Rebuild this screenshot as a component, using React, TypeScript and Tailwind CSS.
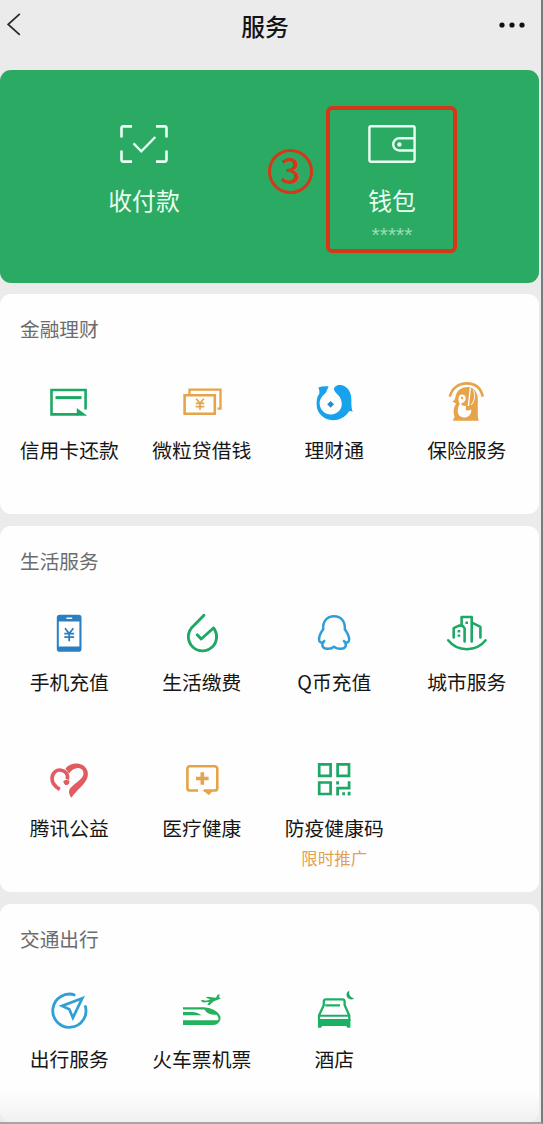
import type { ReactNode } from "react";

const GREEN = "#1ea866";
const ORANGE = "#e5a34a";
const BLUE = "#2f9fd6";

function Icon({ color, children }: { color: string; children: ReactNode }) {
  return (
    <svg viewBox="0 0 48 48" className="size-12" fill="none" stroke={color} strokeWidth="2.6">
      {children}
    </svg>
  );
}

function CreditCardIcon() {
  return (
    <Icon color={GREEN}>
      <path d="M40.6 31.5V12H6.5v24.4H33" />
      <path d="M10.5 19.6h26" strokeWidth="3" />
      <path d="M31.8 30l10.4 7.7H31.8z" fill={GREEN} stroke="none" />
    </Icon>
  );
}

function LoanIcon() {
  return (
    <Icon color={ORANGE}>
      <path d="M6.6 17.3h30.2v18.4H6.6z" />
      <path d="M11.5 16.5v-4.9h31v19h-3" strokeWidth="2.3" />
      <path d="M18.2 20.7l3.8 4.5 3.8-4.5M22 25v6.8M17.7 25.4h8.6M17.7 28.6h8.6" strokeWidth="1.7" />
    </Icon>
  );
}

function FishIcon() {
  return (
    <Icon color="#19a2ec">
      <path
        d="M8.3 9.6C11.5 8.3 15 7.9 18.6 8.4C17.6 10.6 16.8 13 15.6 14.8C14.6 16.4 12.6 17.8 11.3 19.8C10 21.8 9.5 23.8 9.7 26C10.2 32.4 15 36.6 21 36.5C27.3 36.3 31.8 31.7 31.8 26C31.7 22.3 30.4 19.2 28 16.9C26.2 15.2 24.2 13.6 24 11.3C24 8.8 26.7 6.9 30.5 7.1C37.8 7.8 41.6 15 41.4 22C41.3 26.4 41.3 29.2 42.6 34C40.8 32.5 39.7 32.7 38.5 34C35 39.4 29.5 42.2 23 42.2C14 42.1 6.6 35.3 6.6 26.5C6.6 21.5 7.2 18.5 9.3 15.8C9.6 13.6 9.3 11.6 8.3 9.6Z"
        fill="#19a2ec"
        stroke="none"
      />
      <path d="M20.6 22.9l3.4 3.4-3.4 3.4-3.4-3.4z" fill="#258fc4" stroke="none" />
    </Icon>
  );
}

function InsuranceIcon() {
  return (
    <Icon color={ORANGE}>
      <path d="M6.8 18.6C9 10 15.8 5.4 23.8 5.4S37.8 10 39.8 18.6" strokeWidth="2.6" />
      <path
        d="M25 9C31 10 34.8 14.2 34.8 21v15c0 3 .2 4.5 1 6.7H9.8c.6-1.6 1-2.6 1.8-3.8C10 34 10.4 29 13.3 25.7L9.3 23.4C12.3 22.6 12 20 12.8 17.4C14.3 12 19 9 25 9Z"
        fill={ORANGE}
        stroke="none"
      />
      <path
        d="M16.5 17.3c2.6-1.9 5.8-.5 6.2 2.2.3 2.6-1.3 4.6-3.6 5.6-1.3.6-1 2.1.4 2.4 1.3.3 2.2.5 3.5.3l-.4 3c-.1 1.7 1.6 2.3 3.8 1.4l1.8-.8c.5 4.6-2.8 8.2-7.2 8.1-4.4-.1-6.6-3.2-6.2-7.4.2-2.3.8-4.3 2-6.4-1.7-2.3-1.8-5.9-.3-8.4z"
        fill="#fff"
        stroke="none"
      />
      <path d="M27.3 10.2L25.4 28" stroke="#fff" strokeWidth="1.4" />
      <path d="M30.5 12.5c2 5 1.2 10-2.2 14.5" stroke="#fff" strokeWidth="1" />
      <circle cx="19" cy="20" r="1.2" fill={ORANGE} stroke="none" />
    </Icon>
  );
}

function PhoneIcon() {
  return (
    <Icon color="#297fc2">
      <rect x="11.8" y="4.7" width="24.7" height="37" rx="2.8" fill="#297fc2" stroke="none" />
      <path d="M13.8 11.5h20.6v25H13.8z" fill="#fff" stroke="none" />
      <path d="M22 8.2h4.6" stroke="#fff" strokeWidth="1.5" strokeLinecap="round" />
      <path d="M20 18.3l4.2 5.2 4.2-5.2M24.2 23.3v7.9M19.3 23.6h9.8M19.3 27.1h9.8" strokeWidth="1.8" />
    </Icon>
  );
}

function BillsIcon() {
  return (
    <Icon color={GREEN}>
      <path
        d="M26 5.2L13.2 18.3A14.1 14.1 0 1 0 35.5 18L23.2 29l-4-4.3"
        strokeWidth="2.9"
        strokeLinecap="round"
        strokeLinejoin="round"
      />
    </Icon>
  );
}

function PenguinIcon() {
  return (
    <Icon color={BLUE}>
      <path
        d="M14.2 31C11.5 33.8 9 32.5 9 29.3C9 25.8 11 22.4 13.2 19.3C12.6 11.4 17 6.2 24 6.2S35.4 11.4 34.8 19.3C37 22.4 39.2 25.8 39.2 29.3C39.2 32.5 36.7 33.8 34 31M14.2 31C11 34.7 12 38.5 17 38.8C20 39.1 22.3 38.4 24.1 36.7C26 38.4 28.3 39.1 31.2 38.8C36.2 38.5 37.2 34.7 34 31"
        strokeWidth="2.5"
        strokeLinecap="round"
        strokeLinejoin="round"
      />
    </Icon>
  );
}

function CityIcon() {
  return (
    <Icon color={GREEN}>
      <path
        d="M5.2 30.3C10 36.5 16.5 39.2 23.8 39.2S37.8 36.5 42.6 30.3M10.7 27.5V18.2L16 15.6H19.4L21.6 18.3V31.5M18.6 15V7H28.7V31.5M29 12.6L37.4 16.9V27.5"
        strokeWidth="2.6"
        strokeLinecap="round"
        strokeLinejoin="round"
      />
      <path d="M14.6 20.1h2.6v2.4h-2.6zM14.6 24.4h2.6v2.4h-2.6zM22.4 11.4H25v2.5h-2.6z" fill={GREEN} stroke="none" />
    </Icon>
  );
}

function HeartIcon() {
  return (
    <Icon color="#e15c61">
      <path d="M14.8 33.4C9.4 30.2 6.8 26.4 7 22C7.4 16.7 11.4 13.3 16.2 14.2C20.6 15 23.6 18.6 22.3 23.5" strokeWidth="3.6" />
      <path
        d="M20.4 12.6C24 8.2 29.5 6.8 34.8 8C40.8 9.4 44 15 42.6 20.8C40.9 28 31 34.5 26.4 41.8C24.2 39 23.2 35.6 25 32.6C28.6 27.8 36.6 24 38.2 19.2C39.3 15.4 37 12 33.2 11.9C29.5 11.8 26.4 14 24 17.6Z"
        fill="#e15c61"
        stroke="none"
      />
      <path d="M18.3 25.2c1.6-1.6 4.2-1.6 6-.6.6 2.2-.4 4.2-2.4 4.5-1.8.2-3-.8-3.6-3.9z" fill="#e15c61" stroke="none" />
    </Icon>
  );
}

function MedicalIcon() {
  return (
    <Icon color={ORANGE}>
      <path d="M20 34.5H12a2.6 2.6 0 0 1-2.6-2.6V12.8A2.6 2.6 0 0 1 12 10.2h24.7a2.6 2.6 0 0 1 2.6 2.6v19.1a2.6 2.6 0 0 1-2.6 2.6H26" />
      <path d="M24.4 34h10.8L31 39.3z" fill={ORANGE} stroke="none" />
      <path d="M24.3 16.2v12.6M18 22.5h12.6" strokeWidth="3.6" />
    </Icon>
  );
}

function QrIcon() {
  return (
    <Icon color={GREEN}>
      <path d="M9.2 8.4h11.4v11.5H9.2zM27.6 8.4H39v11.5H27.6zM9.2 26.5h11.4V38H9.2z" strokeWidth="2.7" />
      <path
        d="M26.2 25.2H29v3.2h-2.8zM37.7 25.2h2.8v8.3H29v5.9h-2.8v-8.6h11.5zM32.2 36.3h2.8v3h-2.8zM37.7 35.8h2.8v3.6h-2.8z"
        fill={GREEN}
        stroke="none"
      />
    </Icon>
  );
}

function TravelIcon() {
  return (
    <Icon color={BLUE}>
      <path d="M30.3 8.2A16.6 16.6 0 1 0 40.1 18.4" strokeWidth="2.8" />
      <path d="M37.3 11.2L17 18.9l7.3 3.4 3.6 8.5z" strokeWidth="2.7" />
    </Icon>
  );
}

function TrainIcon() {
  return (
    <Icon color="#25b15e">
      <path d="M5 21.4h20.5c7.5 0 14 4 16 9" strokeWidth="2.2" />
      <path d="M41 29.5c1.2 2.6.4 4.4-1.7 5H5" strokeWidth="2" />
      <path d="M5 33.5h36.7c-1 3-3.5 4.6-7 4.6H5z" fill="#25b15e" stroke="none" />
      <path d="M5 25h9c4 .2 7 1.3 9.5 3.3H5zM26 21.3c6.2.2 10.4 2.3 13 6.2-6 .8-11-.8-13-6.2z" fill="#25b15e" stroke="none" />
      <path
        d="M22.6 13.4l2.5-.4 2.7.8 4.6-1.2-4.7-2.1 2.2-.7 8 1 1.9-3.3h2l-1 3c2.3-.3 2.6 1.1.4 1.8l-5.4 1.9-4.2 3.9h-2.3l2-3.4-5 .8c-1.5-.2-2.7-.9-3.7-2.1z"
        fill="#25b15e"
        stroke="none"
      />
    </Icon>
  );
}

function HotelIcon() {
  return (
    <Icon color="#1bb163">
      <path d="M9 34v-5.5L13.8 18v-3.4c0-1.4.8-2.2 2.2-2.2h16.4c1.4 0 2.2.8 2.2 2.2V18l4.7 10.5V34" strokeWidth="2.3" />
      <path d="M15.2 18.4H30M9.5 28.7h29.6" strokeWidth="2.1" />
      <path d="M8 31.9h32.4v8.8h-3.1L36.2 39H12.1L11 40.7H8z" fill="#1bb163" stroke="none" />
      <path d="M39.5 3.4C38.2 7 40.2 10.5 44.2 11.3C41.5 13.7 37 12.2 36.5 8.6C36.2 6.4 37.3 4.3 39.5 3.4Z" fill="#1ea866" stroke="none" />
    </Icon>
  );
}

type Service = { label: string; icon: ReactNode; note?: string };

function Services({ items }: { items: Service[] }) {
  return (
    <div className="ml-[3px] grid w-[530px] grid-cols-4">
      {items.map((item) => (
        <div key={item.label} className="flex flex-col items-center">
          {item.icon}
          <span className="mt-2.5 text-[19.8px] leading-7 whitespace-nowrap text-[#161616]">{item.label}</span>
          {item.note && <span className="mt-1 text-[16.5px] leading-6 text-[#e3a04f]">{item.note}</span>}
        </div>
      ))}
    </div>
  );
}

function SectionTitle({ children }: { children: ReactNode }) {
  return <h2 className="pl-5 text-[19.7px] leading-7 text-[#6c6c6c]">{children}</h2>;
}

const finance: Service[] = [
  { label: "信用卡还款", icon: <CreditCardIcon /> },
  { label: "微粒贷借钱", icon: <LoanIcon /> },
  { label: "理财通", icon: <FishIcon /> },
  { label: "保险服务", icon: <InsuranceIcon /> },
];

const life: Service[] = [
  { label: "手机充值", icon: <PhoneIcon /> },
  { label: "生活缴费", icon: <BillsIcon /> },
  { label: "Q币充值", icon: <PenguinIcon /> },
  { label: "城市服务", icon: <CityIcon /> },
];

const wellbeing: Service[] = [
  { label: "腾讯公益", icon: <HeartIcon /> },
  { label: "医疗健康", icon: <MedicalIcon /> },
  { label: "防疫健康码", icon: <QrIcon />, note: "限时推广" },
];

const travel: Service[] = [
  { label: "出行服务", icon: <TravelIcon /> },
  { label: "火车票机票", icon: <TrainIcon /> },
  { label: "酒店", icon: <HotelIcon /> },
];

export default function App() {
  return (
    <div className="h-[1124px] w-[543px] overflow-hidden border-r-2 border-b-2 border-r-[#7b7b7b] border-b-[#a5a5a5] bg-[#ebebeb] pr-0.5 font-['Noto_Sans_CJK_SC',sans-serif]">
      <header className="flex h-[70px] justify-between pr-[14px] pl-[7px] pt-2">
        <svg viewBox="0 0 14 24" className="mt-[5px] h-6 w-3.5" fill="none" stroke="#2a2a2a" strokeWidth="1.8">
          <path d="M12.8 .8L1.2 11.3l11.6 10.5" />
        </svg>
        <h1 className="pl-2.5 text-[23.8px] leading-9 font-medium text-[#141414]">服务</h1>
        <svg viewBox="0 0 26 6" className="mt-3.5 h-1.5 w-[26px]" fill="#111">
          <circle cx="3" cy="3" r="2.6" />
          <circle cx="13" cy="3" r="2.6" />
          <circle cx="23" cy="3" r="2.6" />
        </svg>
      </header>

      <section className="relative h-[213px] rounded-[11px] bg-[#2baa63] pt-[50px] text-[#e9fff2]">
        <div className="ml-5 grid w-[496px] grid-cols-2">
          <div className="flex flex-col items-center">
            <svg viewBox="0 0 48 48" className="size-12" fill="none" stroke="currentColor" strokeWidth="2.6">
              <path d="M1.5 17.5V8.2c0-1.2.6-1.8 1.8-1.8H12M36 6.4h8.7c1.2 0 1.8.6 1.8 1.8v9.3M46.5 30.5v9.3c0 1.2-.6 1.8-1.8 1.8H36M12 41.6H3.3c-1.2 0-1.8-.6-1.8-1.8v-9.3" />
              <path d="M13.5 23.4l7.8 8L35.3 17" strokeWidth="2.3" />
            </svg>
            <span className="mt-3.5 text-[23.8px] leading-9">收付款</span>
          </div>
          <div className="flex flex-col items-center">
            <svg viewBox="0 0 48 48" className="size-12" fill="none" stroke="currentColor" strokeWidth="2.4">
              <rect x="1.4" y="6.3" width="45.2" height="35.4" rx="1.6" />
              <path d="M46.5 18.3H31.3a6.1 6.1 0 0 0 0 12.2h15.2" />
              <circle cx="31.4" cy="24.5" r="2.2" fill="currentColor" stroke="none" />
            </svg>
            <span className="mt-3.5 text-[23.8px] leading-9">钱包</span>
            <span className="mt-[5px] font-['Liberation_Sans',sans-serif] text-[21px] leading-6 text-[#9addb7]">*****</span>
          </div>
        </div>
        {/* step marker over the wallet entry */}
        <div className="absolute top-9 left-[326px] h-[147px] w-[131px] rounded-md border-4 border-[#d53819]" />
        <div className="absolute top-[79px] left-[268px] flex size-[45px] items-center justify-center rounded-full border-[3px] border-[#d53819] pb-2 text-[36px] leading-none font-medium text-[#d53819]">
          3
        </div>
      </section>

      <section className="mt-[11px] h-[220px] rounded-[11px] bg-[#fefefe] pt-[21px]">
        <SectionTitle>金融理财</SectionTitle>
        <div className="mt-[35px]">
          <Services items={finance} />
        </div>
      </section>

      <section className="mt-3 h-[366px] rounded-[11px] bg-[#fefefe] pt-[21px]">
        <SectionTitle>生活服务</SectionTitle>
        <div className="mt-[35px] flex flex-col gap-[60px]">
          <Services items={life} />
          <Services items={wellbeing} />
        </div>
      </section>

      <section className="mt-3 h-[218px] rounded-[11px] bg-linear-to-b from-[#fefefe] from-85% to-[#f1f1f1] pt-[21px]">
        <SectionTitle>交通出行</SectionTitle>
        <div className="mt-[34px]">
          <Services items={travel} />
        </div>
      </section>
    </div>
  );
}
